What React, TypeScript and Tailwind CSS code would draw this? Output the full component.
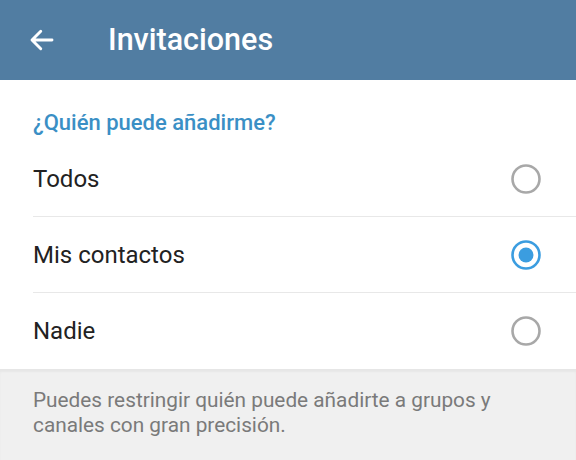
import React from "react";

const options = [
  { label: "Todos", checked: false },
  { label: "Mis contactos", checked: true },
  { label: "Nadie", checked: false },
];

function Radio({ checked }: { checked: boolean }) {
  return (
    <svg width="32" height="32" viewBox="0 0 32 32">
      <circle
        cx="16"
        cy="16"
        r="13.5"
        fill="none"
        stroke={checked ? "#3b9de0" : "#a8a8a8"}
        strokeWidth="2.6"
      />
      {checked && <circle cx="16" cy="16" r="7.5" fill="#3b9de0" />}
    </svg>
  );
}

export default function App() {
  return (
    <div
      className="w-[576px] h-[460px] overflow-hidden bg-white flex flex-col"
      style={{ fontFamily: "Roboto, 'Noto Sans', sans-serif" }}
    >
      <header className="h-[80px] bg-[#517da2] flex items-center shrink-0">
        <div className="w-[108px] pl-[27px] flex items-center">
          <svg width="30" height="30" viewBox="0 0 24 24" fill="none">
            <path
              d="M20 12H4.5M11 5l-7 7 7 7"
              stroke="#fff"
              strokeWidth="2.3"
              strokeLinecap="round"
              strokeLinejoin="round"
            />
          </svg>
        </div>
        <h1 className="text-white text-[30.5px] font-medium leading-none">
          Invitaciones
        </h1>
      </header>

      <section className="bg-white">
        <div className="pl-[33px] pt-[30px] pb-[5px] text-[22px] font-medium text-[#3a8fc5] leading-[26px]">
          ¿Quién puede añadirme?
        </div>
        {options.map((o, i) => (
          <div key={o.label} className="pl-[33px]">
            <div
              className={
                "h-[76px] flex items-center justify-between pr-[34px] " +
                (i < options.length - 1 ? "border-b border-[#e8e8e8]" : "")
              }
            >
              <span className="text-[24px] text-[#222] leading-none">
                {o.label}
              </span>
              <Radio checked={o.checked} />
            </div>
          </div>
        ))}
      </section>

      <footer className="flex-1 bg-[#f0f0f0] border-t border-[#e6e6e6] shadow-[inset_0_2px_2px_rgba(0,0,0,0.04)] pl-[33px] pr-[20px] pt-[18px] text-[20.8px] leading-[25px] text-[#7a7a7a]">
        Puedes restringir quién puede añadirte a grupos y
        <br />
        canales con gran precisión.
      </footer>
    </div>
  );
}
